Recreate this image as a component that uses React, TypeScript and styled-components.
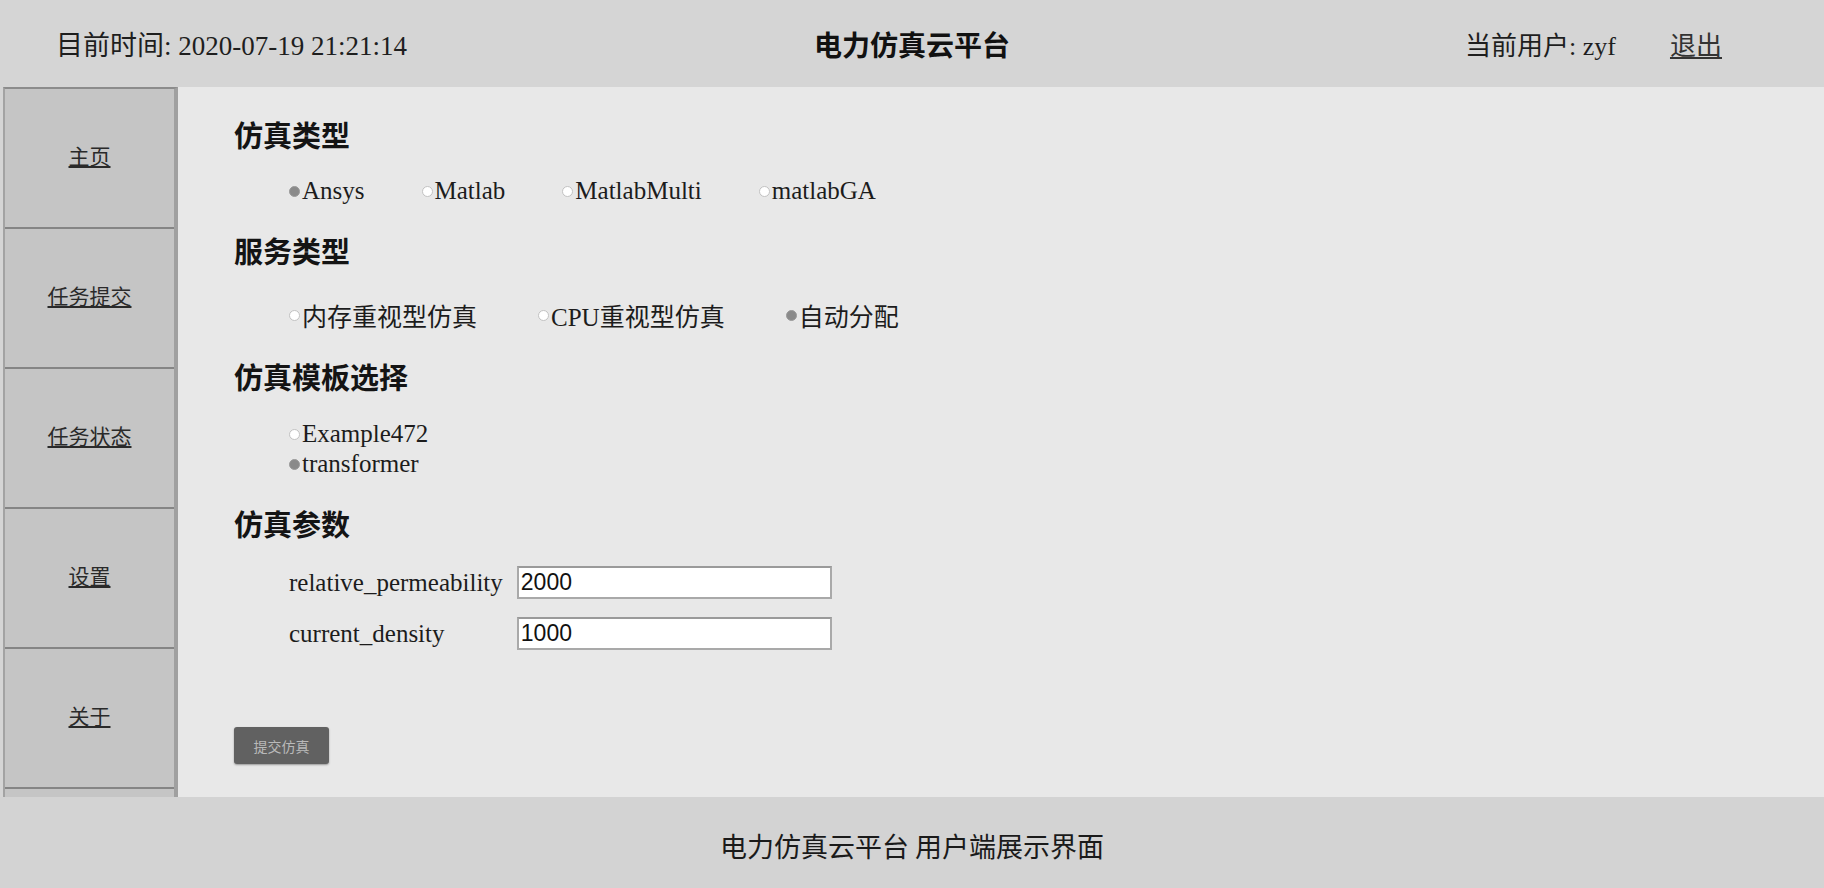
import React, { useState } from 'react'
import styled, { createGlobalStyle } from 'styled-components'

const GlobalStyle = createGlobalStyle`
  html, body, #root {
    height: 100%;
  }
  body {
    margin: 0;
    font-family: "Liberation Serif", "Noto Sans CJK SC", serif;
    color: #1e1e1e;
  }
`

const Page = styled.div`
  display: flex;
  flex-direction: column;
  height: 100vh;
  min-height: 888px;
`

const Header = styled.header`
  display: grid;
  grid-template-columns: 1fr auto 1fr;
  align-items: center;
  height: 87px;
  padding: 0 56px;
  background: #d5d5d5;
  font-size: 26px;
`

const Clock = styled.div`
  justify-self: start;
  font-size: 27px;
`

const Title = styled.div`
  font-family: "Noto Sans CJK SC", sans-serif;
  font-weight: 700;
  font-size: 28px;
  color: #111;
`

const UserBox = styled.div`
  justify-self: end;
  display: flex;
  align-items: center;
  gap: 54px;
  margin-right: 46px;
`

const Logout = styled.a`
  color: #333;
  text-decoration: underline;
  cursor: pointer;
`

const Body = styled.div`
  flex: 1;
  display: flex;
  background: #d5d5d5;
`

const Sidebar = styled.nav`
  width: 169px;
  margin-left: 3px;
  background: #c5c5c5;
  border-left: 2px solid #a3a3a3;
  border-right: 4px solid #a0a0a0;
  border-top: 2px solid #8c8c8c;
  display: flex;
  flex-direction: column;
`

const NavItem = styled.a`
  box-sizing: border-box;
  height: 140px;
  padding-bottom: 6px;
  border-bottom: 2px solid #858585;
  display: flex;
  align-items: center;
  justify-content: center;
  font-family: "Noto Sans CJK SC", sans-serif;
  font-size: 21px;
  color: #2a2a2a;
  text-decoration: underline;
  cursor: pointer;
`

const Content = styled.main`
  flex: 1;
  background: #e8e8e8;
  padding: 27px 0 0 56px;
`

const Heading = styled.h2<{ $top: number }>`
  margin: ${({ $top }) => $top}px 0 0;
  height: 40px;
  line-height: 40px;
  font-family: "Noto Sans CJK SC", sans-serif;
  font-size: 29px;
  font-weight: 700;
  color: #141414;
`

const RadioRow = styled.div<{ $top: number; $gap: number }>`
  display: flex;
  align-items: center;
  gap: ${({ $gap }) => $gap}px;
  margin: ${({ $top }) => $top}px 0 0 55px;
  height: 34px;
`

const RadioColumn = styled.div<{ $top: number }>`
  display: flex;
  flex-direction: column;
  margin: ${({ $top }) => $top}px 0 0 55px;
`

const Choice = styled.label`
  display: flex;
  align-items: center;
  height: 30px;
  font-size: 25px;
  color: #1c1c1c;
  white-space: nowrap;
`

const Radio = styled.input`
  appearance: none;
  width: 11px;
  height: 11px;
  margin: 0 2px 0 0;
  border-radius: 50%;
  border: 1px solid #c2c2c2;
  background: #fff;
  &:checked {
    background: #8a8a8a;
    border-color: #9a9a9a;
  }
`

const Params = styled.div`
  display: grid;
  grid-template-columns: auto 315px;
  align-items: center;
  column-gap: 14px;
  row-gap: 18px;
  margin: 23px 0 0 55px;
  width: max-content;
`

const ParamLabel = styled.label`
  font-size: 25px;
  color: #1c1c1c;
`

const ParamInput = styled.input`
  box-sizing: border-box;
  height: 33px;
  padding: 0 2px;
  border: 2px solid #a9a9a9;
  border-top-color: #9a9a9a;
  background: #fff;
  font-family: "Liberation Sans", Arial, sans-serif;
  font-size: 23px;
  color: #111;
  outline: none;
`

const SubmitButton = styled.button`
  display: block;
  margin-top: 77px;
  width: 95px;
  height: 37px;
  border: none;
  border-radius: 3px;
  background: #616161;
  box-shadow: 0 1px 2px rgba(0, 0, 0, 0.35);
  color: #b9b9b9;
  font-family: "Noto Sans CJK SC", sans-serif;
  font-size: 14px;
  cursor: pointer;
`

const Footer = styled.footer`
  height: 91px;
  display: flex;
  align-items: center;
  justify-content: center;
  padding-top: 6px;
  box-sizing: border-box;
  background: #d3d3d3;
  font-family: "Noto Sans CJK SC", sans-serif;
  font-size: 27px;
  color: #1a1a1a;
`

const NAV = ['主页', '任务提交', '任务状态', '设置', '关于']
const SIM_TYPES = ['Ansys', 'Matlab', 'MatlabMulti', 'matlabGA']
const SERVICE_TYPES = ['内存重视型仿真', 'CPU重视型仿真', '自动分配']
const TEMPLATES = ['Example472', 'transformer']

export default function App() {
  const [sim, setSim] = useState('Ansys')
  const [service, setService] = useState('自动分配')
  const [template, setTemplate] = useState('transformer')
  const [params, setParams] = useState({ relative_permeability: '2000', current_density: '1000' })
  const now = '2020-07-19 21:21:14'

  return (
    <Page>
      <GlobalStyle />
      <Header>
        <Clock>目前时间: {now}</Clock>
        <Title>电力仿真云平台</Title>
        <UserBox>
          <span>当前用户: zyf</span>
          <Logout>退出</Logout>
        </UserBox>
      </Header>
      <Body>
        <Sidebar>
          {NAV.map((n) => (
            <NavItem key={n}>{n}</NavItem>
          ))}
        </Sidebar>
        <Content>
          <Heading $top={0}>仿真类型</Heading>
          <RadioRow $top={20} $gap={57}>
            {SIM_TYPES.map((t) => (
              <Choice key={t}>
                <Radio type="radio" name="sim" checked={sim === t} onChange={() => setSim(t)} />
                {t}
              </Choice>
            ))}
          </RadioRow>

          <Heading $top={22}>服务类型</Heading>
          <RadioRow $top={28} $gap={61}>
            {SERVICE_TYPES.map((t) => (
              <Choice key={t}>
                <Radio type="radio" name="service" checked={service === t} onChange={() => setService(t)} />
                {t}
              </Choice>
            ))}
          </RadioRow>

          <Heading $top={24}>仿真模板选择</Heading>
          <RadioColumn $top={23}>
            {TEMPLATES.map((t) => (
              <Choice key={t}>
                <Radio type="radio" name="template" checked={template === t} onChange={() => setTemplate(t)} />
                {t}
              </Choice>
            ))}
          </RadioColumn>

          <Heading $top={24}>仿真参数</Heading>
          <Params>
            {Object.entries(params).map(([k, v]) => (
              <React.Fragment key={k}>
                <ParamLabel htmlFor={k}>{k}</ParamLabel>
                <ParamInput
                  id={k}
                  value={v}
                  onChange={(e) => setParams({ ...params, [k]: e.target.value })}
                />
              </React.Fragment>
            ))}
          </Params>

          <SubmitButton>提交仿真</SubmitButton>
        </Content>
      </Body>
      <Footer>电力仿真云平台 用户端展示界面</Footer>
    </Page>
  )
}
